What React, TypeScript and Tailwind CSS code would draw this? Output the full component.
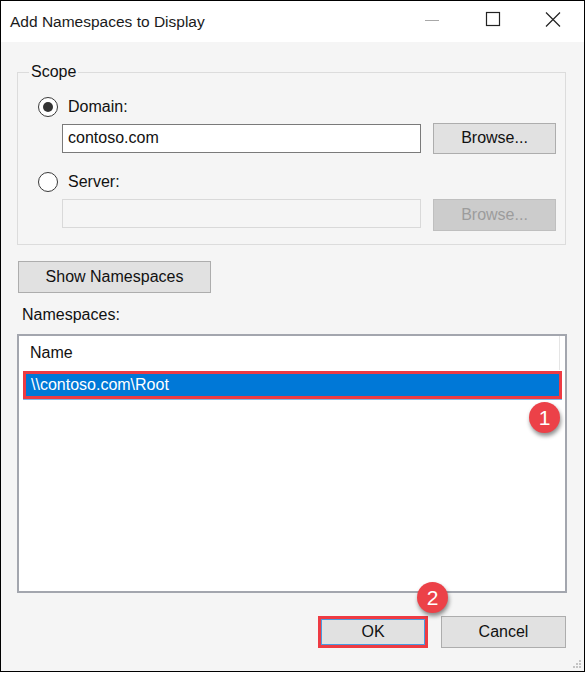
import React from 'react';

const font = { fontFamily: '"Liberation Sans", Arial, sans-serif' };

function Radio({ checked, label }: { checked?: boolean; label: string }) {
  return (
    <div className="ml-[20px] flex h-[22px] items-center gap-[10px]">
      <span className="flex h-[20px] w-[20px] items-center justify-center rounded-full border border-[#3a3a3a] bg-white">
        {checked && <span className="h-[10px] w-[10px] rounded-full bg-[#333]" />}
      </span>
      <span className="text-[16px] text-[#111]">{label}</span>
    </div>
  );
}

function Badge({ n, className }: { n: string; className: string }) {
  return (
    <div
      className={`absolute flex h-[31px] w-[31px] items-center justify-center rounded-full bg-[#ec4148] text-[21px] text-white shadow-[1px_3px_4px_rgba(0,0,0,0.45)] ${className}`}
    >
      {n}
    </div>
  );
}

export default function App() {
  return (
    <div className="bg-white" style={font}>
      <div className="relative flex h-[672px] w-[585px] flex-col border border-black bg-[#f5f5f5]">
        {/* title bar */}
        <div className="flex h-[41px] items-center justify-between bg-white pl-[9px]">
          <span className="text-[15.5px] text-[#1a1a1a]">Add Namespaces to Display</span>
          <div className="flex h-full items-center">
            <svg width="60" height="41" viewBox="0 0 60 41">
              <line x1="24" y1="19.5" x2="38" y2="19.5" stroke="#a8a8a8" strokeWidth="1" />
            </svg>
            <svg width="60" height="41" viewBox="0 0 60 41">
              <rect x="25.5" y="11.5" width="13" height="13" fill="none" stroke="#222" strokeWidth="1.2" />
            </svg>
            <svg width="60" height="41" viewBox="0 0 60 41" className="mr-[3px]">
              <path d="M25 11.5 L39 25.5 M39 11.5 L25 25.5" stroke="#222" strokeWidth="1.2" />
            </svg>
          </div>
        </div>

        <div className="flex flex-col pl-[16px] pr-[17px]">
          {/* Scope group */}
          <div className="relative mt-[30px] flex h-[173px] w-[549px] flex-col border border-[#dcdcdc] pb-[13px]">
            <span className="absolute left-[11px] top-[-11px] bg-[#f5f5f5] px-[2px] text-[16px] leading-[20px] text-[#111]">
              Scope
            </span>
            <div className="mt-[23px]">
              <Radio checked label="Domain:" />
            </div>
            <div className="mt-[5px] flex h-[30px] items-center">
              <div className="ml-[44px] flex h-[29px] w-[359px] items-center border border-[#7a7a7a] bg-white pl-[5px] text-[16px] text-[#111]">
                contoso.com
              </div>
              <button className="ml-[12px] h-[31px] w-[123px] border border-[#adadad] bg-[#e1e1e1] text-[16px] text-[#111]">
                Browse...
              </button>
            </div>
            <div className="mt-[18px]">
              <Radio label="Server:" />
            </div>
            <div className="mt-[6px] flex items-start">
              <div className="ml-[44px] h-[29px] w-[359px] border border-[#d9d9d9] bg-[#f5f5f5]" />
              <button className="ml-[12px] h-[32px] w-[123px] border border-[#bfbfbf] bg-[#cccccc] text-[16px] text-[#9c9c9c]">
                Browse...
              </button>
            </div>
          </div>

          <button className="ml-[1px] mt-[16px] h-[32px] w-[193px] border border-[#adadad] bg-[#e1e1e1] text-[16px] text-[#111]">
            Show Namespaces
          </button>

          <div className="ml-[5px] mt-[12px] text-[16px] leading-[20px] text-[#111]">Namespaces:</div>

          {/* list */}
          <div className="mt-[9px] flex h-[259px] w-[550px] flex-col border-2 border-[#a3a6ae] bg-white">
            <div className="flex h-[34px] items-center justify-between">
              <span className="pl-[11px] text-[16px] text-[#111]">Name</span>
              <span className="mr-[5px] h-full w-px bg-[#e5e5e5]" />
            </div>
            <div className="ml-[4px] mr-[3px] mt-px flex h-[28px] items-center border-[3px] border-[#ee3b43] bg-[#0078d7] pl-[5px] text-[16px] text-white shadow-[0_1px_0_#7fb6e6]">
              \\contoso.com\Root
            </div>
          </div>

          {/* buttons */}
          <div className="mt-[23px] flex justify-end gap-[13px] pr-px">
            <div className="flex h-[32px] w-[110px] border-[3px] border-[#ee3b43]">
              <button className="h-full w-full border border-[#4a9be0] bg-[#e1e1e1] text-[16px] text-[#111]">
                OK
              </button>
            </div>
            <button className="h-[32px] w-[125px] border border-[#adadad] bg-[#e1e1e1] text-[16px] text-[#111]">
              Cancel
            </button>
          </div>
        </div>

        <Badge n="1" className="left-[528px] top-[401px]" />
        <Badge n="2" className="left-[416px] top-[581px]" />

        {/* resize grip */}
        <svg width="12" height="12" viewBox="0 0 12 12" className="absolute bottom-[1px] right-[1px]">
          <rect x="8" y="2" width="2" height="2" fill="#c4c4c4" />
          <rect x="5" y="5" width="2" height="2" fill="#c4c4c4" />
          <rect x="8" y="5" width="2" height="2" fill="#c4c4c4" />
          <rect x="2" y="8" width="2" height="2" fill="#c4c4c4" />
          <rect x="5" y="8" width="2" height="2" fill="#c4c4c4" />
          <rect x="8" y="8" width="2" height="2" fill="#c4c4c4" />
        </svg>
      </div>
    </div>
  );
}
